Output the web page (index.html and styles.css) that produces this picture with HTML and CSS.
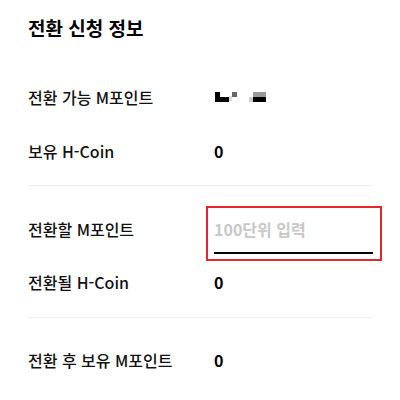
FILE: index.html
```html
<!DOCTYPE html>
<html lang="ko">
<head>
<meta charset="utf-8">
<link rel="stylesheet" href="styles.css">
</head>
<body>
<main class="page">
  <h1 class="title">전환 신청 정보</h1>

  <section class="group group-first">
    <div class="row">
      <span class="label">전환 가능 M포인트</span>
      <span class="value">
        <svg class="masked" width="52" height="11" viewBox="0 0 52 11">
          <rect x="0" y="0" width="5" height="10" fill="#000"/>
          <rect x="0" y="5" width="14" height="5" fill="#000"/>
          <rect x="14" y="4" width="3" height="5" fill="#ddd"/>
          <rect x="17" y="0" width="5" height="5" fill="#666"/>
          <rect x="34" y="5" width="4" height="5" fill="#ccc"/>
          <rect x="38" y="0" width="13" height="5" fill="#999"/>
          <rect x="38" y="5" width="13" height="5" fill="#000"/>
        </svg>
      </span>
    </div>
    <div class="row row-gap">
      <span class="label">보유 H-Coin</span>
      <span class="value">0</span>
    </div>
  </section>

  <section class="group group-second">
    <div class="row row-input">
      <label class="label label-input" for="amount">전환할 M포인트</label>
      <div class="field">
        <input id="amount" class="input" type="text" placeholder="100단위 입력">
      </div>
    </div>
    <div class="row row-after-input">
      <span class="label">전환될 H-Coin</span>
      <span class="value">0</span>
    </div>
  </section>

  <section class="group group-third">
    <div class="row">
      <span class="label">전환 후 보유 M포인트</span>
      <span class="value">0</span>
    </div>
  </section>
</main>
</body>
</html>
```

FILE: styles.css
```css
* {
  box-sizing: border-box;
}

html, body {
  margin: 0;
  padding: 0;
  background: #fff;
}

body {
  font-family: "Noto Sans CJK KR", "Noto Sans", sans-serif;
  color: #111;
}

.page {
  width: 400px;
  padding: 15px 27px 0 28px;
}

.title {
  margin: 0;
  font-size: 19px;
  line-height: 26px;
  font-weight: 700;
  color: #000;
}

.group {
  border-bottom: 1px solid #f1f1f1;
}

.group-first {
  padding-top: 45px;
  padding-bottom: 23px;
}

.group-second {
  padding-top: 20px;
  padding-bottom: 24px;
}

.group-third {
  border-bottom: none;
  padding-top: 31px;
}

.row {
  display: flex;
  align-items: center;
  font-size: 16px;
  line-height: 22px;
}

.row-gap {
  margin-top: 32px;
}

.label {
  width: 186px;
  flex: none;
  font-weight: 500;
  color: #111;
}

.value {
  font-weight: 700;
  color: #000;
  display: flex;
  align-items: center;
}

.masked {
  display: block;
  margin-left: 1px;
}

.row-input {
  align-items: flex-start;
}

.label-input {
  margin-top: 12px;
}

.field {
  flex: 1;
  margin-left: -8px;
  margin-right: -9px;
  border: 2px solid #e3262e;
  padding: 0 7px 5px 6px;
}

.input {
  display: block;
  width: 100%;
  border: none;
  border-bottom: 2px solid #000;
  padding: 10px 0 12px;
  margin: 0;
  font-family: inherit;
  font-size: 16px;
  line-height: 22px;
  font-weight: 700;
  color: #000;
  background: transparent;
  outline: none;
}

.input::placeholder {
  color: #c8c8c8;
  font-weight: 700;
}

.row-after-input {
  margin-top: 10px;
}
```
